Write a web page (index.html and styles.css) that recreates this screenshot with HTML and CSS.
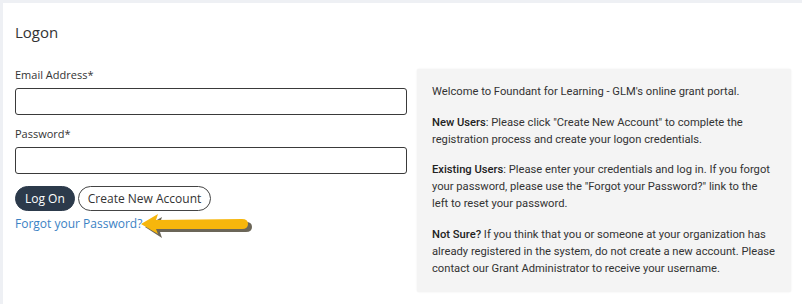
FILE: index.html
```html
<!DOCTYPE html>
<html lang="en">
<head>
    <meta charset="UTF-8">
    <title>Logon</title>
    <link rel="stylesheet" href="styles.css">
</head>
<body>
    <div class="card">
        <h2 class="card-title">Logon</h2>
        <div class="logon-row">
            <form class="logon-form">
                <label for="email">Email Address*</label>
                <input type="text" id="email">
                <label for="password" class="second">Password*</label>
                <input type="password" id="password">
                <div class="buttons">
                    <button type="button" class="btn-primary">Log On</button>
                    <button type="button" class="btn-outline">Create New Account</button>
                </div>
                <div class="forgot">
                    <a href="#">Forgot your Password?</a>
                    <svg class="arrow" width="112" height="28" viewBox="0 0 112 28">
                        <path d="M3 13 L20 3 L18 9 L104 8 Q110 8 110 13 Q110 18 104 18 L18 18 L20 24 Z" fill="#3a3320" opacity="0.75" transform="translate(2 2)"/>
                        <path d="M1 12 L18 2 L16 8 L102 7 Q108 7 108 12 Q108 17 102 17 L16 17 L18 22 Z" fill="#f6b60c"/>
                    </svg>
                </div>
            </form>
            <div class="info">
                <p>Welcome to Foundant for Learning - GLM's online grant portal.</p>
                <p><strong>New Users</strong>: Please click "Create New Account" to complete the registration process and create your logon credentials.</p>
                <p><strong>Existing Users</strong>: Please enter your credentials and log in. If you forgot your password, please use the "Forgot your Password?" link to the<br>left to reset your password.</p>
                <p><strong>Not Sure?</strong> If you think that you or someone at your organization has already registered in the system, do not create a new account. Please contact our Grant Administrator to receive your username.</p>
            </div>
        </div>
    </div>
</body>
</html>
```

FILE: styles.css
```css
body {
    margin: 0;
    background-color: #eef0f4;
    font-family: "Open Sans", sans-serif;
    color: #333;
}

.card {
    margin: 3px 0 0 3px;
    background-color: #fff;
    padding: 19px 11px 0 12px;
    height: 301px;
    box-sizing: border-box;
}

.card-title {
    margin: 0;
    font-size: 15px;
    font-weight: 400;
    line-height: 20px;
    color: #333;
}

.logon-row {
    display: flex;
    gap: 10px;
    margin-top: 24px;
}

.logon-form {
    width: 392px;
    display: flex;
    flex-direction: column;
}

.logon-form label {
    font-size: 11px;
    line-height: 18px;
    margin-bottom: 4px;
}

.logon-form label.second {
    margin-top: 10px;
}

.logon-form input {
    height: 27px;
    box-sizing: border-box;
    border: 1px solid #3a3a3a;
    border-radius: 3px;
    margin: 0;
    font-family: inherit;
}

.buttons {
    display: flex;
    gap: 3px;
    margin-top: 12px;
}

.buttons button {
    height: 25px;
    border-radius: 13px;
    font-family: inherit;
    font-size: 12px;
    padding: 0 9px;
    cursor: pointer;
}

.btn-primary {
    background-color: #2c3a4b;
    border: 1px solid #2c3a4b;
    color: #fff;
}

.btn-outline {
    background-color: #fff;
    border: 1px solid #444;
    color: #333;
}

.forgot {
    position: relative;
    margin-top: 4px;
    font-size: 12px;
    line-height: 18px;
}

.forgot a {
    color: #3b82c4;
    text-decoration: none;
}

.forgot .arrow {
    position: absolute;
    left: 125px;
    top: -3px;
}

.info {
    width: 374px;
    box-sizing: border-box;
    margin-top: 3px;
    padding: 14px 13px 15px 15px;
    background-color: #f4f4f4;
    border-radius: 2px;
    box-shadow: 0 0 2px rgba(0, 0, 0, 0.08);
    font-family: Roboto, sans-serif;
    font-size: 11.2px;
    line-height: 17px;
    color: #333;
}

.info p {
    margin: 0 0 13.5px;
}

.info p:last-child {
    margin-bottom: 0;
}

.info strong {
    font-weight: 500;
    color: #222;
}
```
